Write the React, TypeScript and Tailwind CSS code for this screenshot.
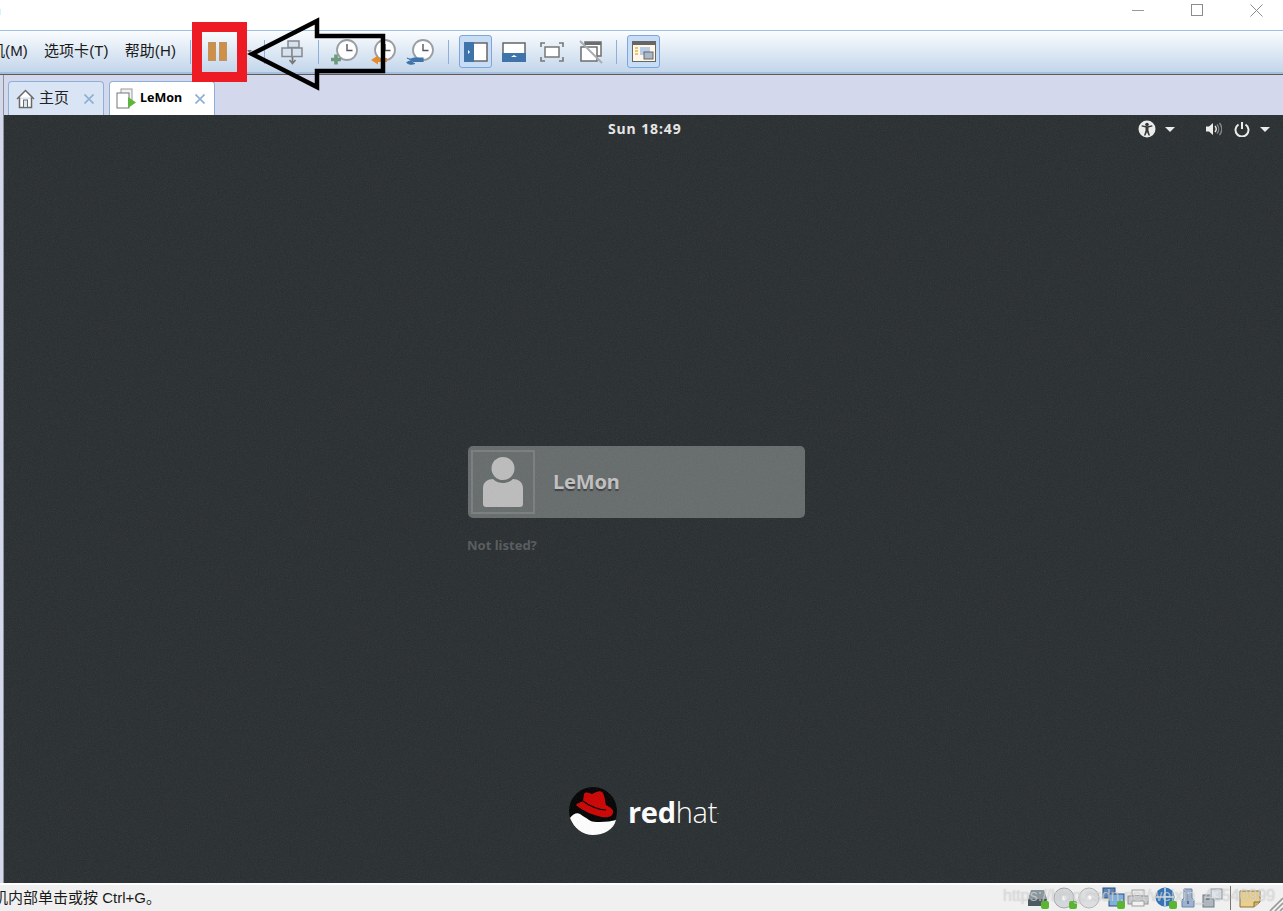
const cjk = "font-['Liberation_Sans','Noto_Sans_CJK_SC',sans-serif]";

function Sep() {
  return <div className="w-px h-[24px] bg-[#8fb0d6] shrink-0" />;
}

function Clock({ children }: { children?: React.ReactNode }) {
  return (
    <svg width="32" height="32" viewBox="0 0 32 32">
      <circle cx="18" cy="14" r="10" fill="#fff" stroke="#9a9ea3" strokeWidth="1.800" />
      <path d="M18 8v6.500h5.500" fill="none" stroke="#55595e" strokeWidth="1.400" />
      {children}
    </svg>
  );
}

function SendKeys() {
  return (
    <svg width="26" height="28" viewBox="0 0 26 28">
      <g fill="#d7e2f0" stroke="#85898f" strokeWidth="1.500">
        <rect x="9" y="3" width="11" height="6.500" />
        <rect x="3" y="10" width="10" height="8.500" />
        <rect x="13" y="10" width="10" height="8.500" />
      </g>
      <path d="M13.500 19v6M10.500 22l3 3.500 3-3.500" fill="none" stroke="#777" strokeWidth="1.700" />
    </svg>
  );
}

function ToolbarIcons() {
  return (
    <div className="w-[129px] flex items-center pl-[10px] gap-[6px] shrink-0">
      <Clock>
        <path d="M2 23.500h10M7 18.500v10" stroke="#6d9a7c" strokeWidth="3.600" />
      </Clock>
      <Clock>
        <path d="M4 24l7-4.500v2.500h9v4h-9v2.500z" fill="#e58b2d" />
      </Clock>
      <Clock>
        <path d="M2 22c3 2 5 1 7 0h9v3.500H9c-2-1-4-1-7 1 1 2 5 2 8 1" fill="#3f74aa" stroke="#3f74aa" strokeWidth="1.200" />
      </Clock>
    </div>
  );
}

function ViewButtons() {
  return (
    <div className="flex items-center shrink-0 pl-[10px] w-[167px]">
      <div className="w-[33px] h-[33px] rounded-[3px] border border-[#7ea6dc] bg-[#c7dcf5] flex items-center justify-center shrink-0">
        <svg width="24" height="20" viewBox="0 0 24 20">
          <rect x="1" y="1" width="22" height="18" fill="#fff" stroke="#666" strokeWidth="1.500" />
          <rect x="0" y="0" width="10" height="20" fill="#3f74aa" />
          <path d="M4 8v4l2-2z" fill="#fff" />
        </svg>
      </div>
      <div className="w-[43px] flex justify-center shrink-0">
        <svg width="24" height="20" viewBox="0 0 24 20">
          <rect x="1" y="1" width="22" height="18" fill="#fff" stroke="#666" strokeWidth="1.500" />
          <rect x="0" y="11" width="24" height="9" fill="#3f74aa" />
          <path d="M9 15h6l-3-2z" fill="#fff" />
        </svg>
      </div>
      <div className="w-[33px] flex justify-center shrink-0">
        <svg width="24" height="20" viewBox="0 0 24 20">
          <rect x="5" y="5" width="14" height="10" fill="#fff" stroke="#777" strokeWidth="1.500" />
          <path d="M1 5V1h4M19 1h4v4M23 15v4h-4M5 19H1v-4" fill="none" stroke="#777" strokeWidth="1.600" />
        </svg>
      </div>
      <div className="w-[45px] flex justify-center shrink-0">
        <svg width="24" height="24" viewBox="0 0 24 24">
          <rect x="6" y="2" width="16" height="14" fill="#fff" stroke="#6d6d6d" strokeWidth="1.500" />
          <rect x="6" y="2" width="16" height="3" fill="#6d6d6d" />
          <rect x="2" y="7" width="16" height="14" fill="#fff" stroke="#6d6d6d" strokeWidth="1.500" />
          <path d="M1 1l22 22" stroke="#a9adb3" strokeWidth="2" />
        </svg>
      </div>
    </div>
  );
}

function StatusIcons() {
  return (
    <div className="flex items-center h-full shrink-0">
      <svg width="242" height="24" viewBox="0 0 242 24">
        {/* disk */}
        <path d="M4 4h13l3 9v7H1v-7z" fill="#8b979e" />
        <rect x="1" y="13" width="19" height="7" fill="#4d5a62" />
        <rect x="14" y="15" width="8" height="8" rx="2" fill="#5cb531" />
        {/* cd drives */}
        <circle cx="37" cy="12" r="10" fill="#d5d8db" stroke="#a4a8ac" />
        <circle cx="37" cy="12" r="2.500" fill="#fff" />
        <rect x="42" y="15" width="8" height="8" rx="2" fill="#5cb531" />
        <circle cx="62" cy="12" r="10" fill="#dcdedf" stroke="#b4b6b8" />
        <circle cx="62" cy="12" r="2.500" fill="#fff" />
        {/* network */}
        <rect x="76" y="2" width="12" height="10" fill="#5d86b8" stroke="#2f4f7a" />
        <rect x="82" y="8" width="15" height="12" fill="#7fb0de" stroke="#2f4f7a" />
        <rect x="90" y="15" width="8" height="8" rx="2" fill="#5cb531" />
        {/* printer */}
        <rect x="105" y="4" width="12" height="6" fill="#eee" stroke="#a0a0a0" />
        <rect x="101" y="10" width="20" height="8" fill="#c9cbce" stroke="#8f9295" />
        <rect x="105" y="15" width="12" height="5" fill="#f2f2f2" stroke="#a0a0a0" />
        {/* globe */}
        <circle cx="138" cy="11" r="9.500" fill="#3574b5" />
        <path d="M138 2v18M129 11h18" stroke="#cfe0f0" strokeWidth="1.500" />
        <rect x="142" y="15" width="8" height="8" rx="2" fill="#5cb531" />
        {/* usb */}
        <path d="M157 3h8v9l2 2v7h-12v-7l2-2z" fill="#9db3cf" stroke="#6c85a6" />
        <path d="M161 8v10" stroke="#3d5c85" strokeWidth="1.400" />
        {/* sound */}
        <rect x="176" y="9" width="11" height="12" fill="#aeb7c0" stroke="#6f7880" />
        <rect x="184" y="3" width="11" height="10" fill="#dfe5ec" stroke="#8b95a0" />
        <path d="M179 13h5" stroke="#444" />
        {/* separator */}
        <rect x="203" y="0" width="1" height="24" fill="#777" />
        {/* note */}
        <path d="M213 5h20v11l-6 5h-14z" fill="#ead08a" stroke="#8a7440" />
        <path d="M227 21v-5h6" fill="#cfb36a" stroke="#8a7440" />
      </svg>
      <svg width="14" height="14" viewBox="0 0 14 14" className="self-end">
        <path d="M14 1L1 14M14 6l-8 8M14 11l-3 3" stroke="#9a9a9a" strokeWidth="1.600" />
      </svg>
    </div>
  );
}

function GnomeTray() {
  return (
    <div className="flex items-center text-white">
      <svg width="18" height="18" viewBox="0 0 18 18">
        <circle cx="9" cy="9" r="8.500" fill="#eeeeec" />
        <circle cx="9" cy="4.500" r="1.800" fill="#2e3336" />
        <path d="M3.500 6.500l4 1v3l-1.500 5h1.500l1.500-3.500 1.500 3.500H12l-1.500-5v-3l4-1-.3-1.200-5.200 1-5.200-1z" fill="#2e3336" />
      </svg>
      <svg className="ml-[9px]" width="10" height="5" viewBox="0 0 10 5"><path d="M0 0h10L5 5z" fill="#eeeeec" /></svg>
      <svg className="ml-[31px]" width="16" height="16" viewBox="0 0 16 16">
        <path d="M0 5.500h3L7 2v12l-4-3.500H0z" fill="#eeeeec" />
        <path d="M9 5c1.500 1.800 1.500 4.200 0 6" fill="none" stroke="#eeeeec" strokeWidth="1.400" />
        <path d="M11 3.500c2.300 2.600 2.300 6.400 0 9M13.500 2c3 3.500 3 8.500 0 12" fill="none" stroke="#808486" strokeWidth="1.400" />
      </svg>
      <svg className="ml-[12px]" width="16" height="16" viewBox="0 0 16 16">
        <path d="M4.500 3.500a6.500 6.500 0 1 0 7 0" fill="none" stroke="#eeeeec" strokeWidth="2" />
        <path d="M8 1v7" stroke="#eeeeec" strokeWidth="2" />
      </svg>
      <svg className="ml-[10px]" width="10" height="5" viewBox="0 0 10 5"><path d="M0 0h10L5 5z" fill="#eeeeec" /></svg>
    </div>
  );
}

function RedHatMark() {
  return (
    <svg width="48" height="48" viewBox="0 0 48 48">
      <circle cx="24" cy="24" r="24" fill="#000" />
      <path d="M1 31c3-4 7-6 10-4 4 3 7 4 9 6 3 2 6 2 11 2 6 0 12-1 16-2-2 9-12 15-23 15C13 48 5 41 1 31z" fill="#fff" />
      <path d="M7 18c2-3 5-2 7-4l1-7c2-3 5-1 8 0 3-1 7-4 10-2 3 3 3 10 4 13 3 2 8 4 7 8-1 4-6 5-11 4-8-2-18-5-26-12z" fill="#cc0000" />
      <path d="M14 14c6 5 16 9 23 9" fill="none" stroke="#000" strokeWidth="1.200" />
    </svg>
  );
}

export default function App() {
  return (
    <div className={`relative w-[1283px] h-[911px] overflow-hidden bg-white flex flex-col ${cjk}`}>
      {/* title bar */}
      <div className="h-[30px] shrink-0 flex items-center bg-white relative">
        <span className="-ml-[7px] -mt-[9px] text-[14px] text-[#555]">n</span>
        <div className="ml-auto flex items-center pr-[20px] -mt-[10px]">
          <div className="w-[12px] h-px bg-[#9a9a9a]" />
          <div className="ml-[47px] w-[12px] h-[12px] border border-[#8c8c8c]" />
          <svg className="ml-[47px]" width="13" height="13" viewBox="0 0 13 13">
            <path d="M0.500 0.500l12 12M12.500 0.500l-12 12" stroke="#8c8c8c" strokeWidth="1" />
          </svg>
        </div>
      </div>

      {/* toolbar */}
      <div className="h-[44px] shrink-0 flex items-center border-t border-[#9cc0e2] border-b-2 border-b-[#a5bfdc] bg-gradient-to-b from-[#fafcfe] to-[#c3d6eb]">
        <div className="w-[190px] shrink-0 overflow-hidden flex items-center text-[15px] text-[#1a1a1a] whitespace-nowrap gap-[16px] tracking-[0.1px]">
          <span className="-ml-[10px]">机(M)</span>
          <span>选项卡(T)</span>
          <span>帮助(H)</span>
        </div>
        <Sep />
        <div className="w-[73px] shrink-0 flex items-center pl-[17px] gap-[3px]">
          <div className="w-[8px] h-[19px] bg-[#d08f47] border border-[#b99568]" />
          <div className="w-[8px] h-[19px] bg-[#d08f47] border border-[#b99568]" />
          <svg className="ml-[17px]" width="5" height="3" viewBox="0 0 5 3"><path d="M0 0h5L2.500 3z" fill="#777" /></svg>
        </div>
        <Sep />
        <div className="w-[53px] shrink-0 flex justify-center">
          <SendKeys />
        </div>
        <Sep />
        <ToolbarIcons />
        <Sep />
        <ViewButtons />
        <Sep />
        <div className="ml-[10px] w-[33px] h-[33px] rounded-[3px] border border-[#7ea6dc] bg-[#c7dcf5] flex items-center justify-center shrink-0">
          <svg width="24" height="21" viewBox="0 0 24 21">
            <rect x="0.500" y="0.500" width="23" height="20" fill="#fff8e8" stroke="#666" />
            <rect x="0" y="0" width="24" height="4" fill="#666" />
            <path d="M3 7h3M3 10h3M3 13h3" stroke="#e8b04a" strokeWidth="1.300" />
            <rect x="8" y="6" width="10" height="8" fill="#b9cde6" />
            <rect x="12" y="11" width="9" height="7" fill="#aab8c8" stroke="#666" />
          </svg>
        </div>
      </div>
      <div className="h-px shrink-0 bg-[#5f5a55]" />

      {/* tab strip */}
      <div className="h-[40px] shrink-0 bg-[#d3d8ec] pl-[3px]">
        <div className="h-full border-l border-l-[#8f9296] flex items-end pl-[4px] gap-[5px]">
          <div className="w-[96px] h-[34px] rounded-t-[4px] border border-b-0 border-[#8fb0d6] bg-[#d9e5f4] flex items-center pl-[7px] text-[15px] text-[#222]">
            <svg width="19" height="20" viewBox="0 0 19 20">
              <path d="M1 10L9.500 1.500 18 10M3.500 8.500V18.500h12V8.500" fill="#fff" stroke="#6a6a6a" strokeWidth="1.500" />
              <rect x="7.500" y="11" width="4" height="7.500" fill="#d9e5f4" stroke="#6a6a6a" />
            </svg>
            <span className="ml-[4px]">主页</span>
            <svg className="ml-[15px]" width="10" height="10" viewBox="0 0 10 10">
              <path d="M0.500 0.500l9 9M9.500 0.500l-9 9" stroke="#8db0d4" strokeWidth="1.700" />
            </svg>
          </div>
          <div className="w-[106px] h-[34px] rounded-t-[4px] border border-b-0 border-[#8fb0d6] bg-white flex items-center pl-[6px] text-[12.5px] font-bold text-black">
            <svg width="21" height="21" viewBox="0 0 21 21">
              <rect x="5" y="1" width="11" height="11" fill="#f2f2f2" stroke="#9a9a9a" />
              <rect x="1" y="5" width="12" height="15" fill="#fff" stroke="#777" />
              <path d="M12 9v11l8-5.500z" fill="#5db53c" />
            </svg>
            <span className="ml-[3px] font-['Noto_Sans',sans-serif]">LeMon</span>
            <svg className="ml-[13px]" width="10" height="10" viewBox="0 0 10 10">
              <path d="M0.500 0.500l9 9M9.500 0.500l-9 9" stroke="#8db0d4" strokeWidth="1.700" />
            </svg>
          </div>
        </div>
      </div>

      {/* guest screen */}
      <div className="h-[768px] shrink-0 bg-[#d3d8ec] pl-[3px]">
        <div className="h-full border-l border-l-[#8f9296] bg-[#272c2f] flex flex-col font-['Noto_Sans',sans-serif] relative">
          <div className="h-[27px] shrink-0 flex items-center relative pr-[13px]">
            <span className="ml-[604px] text-[14px] font-bold text-[#e8e8e6] tracking-[0.9px]">Sun 18:49</span>
            <div className="ml-auto mt-[1px]"><GnomeTray /></div>
          </div>
          <div className="ml-[464px] mt-[304px] w-[337px] h-[72px] rounded-[5px] bg-[#656a6b] flex items-center pl-[3px]">
            <div className="w-[64px] h-[64px] border-2 border-[#797d7e] flex items-center justify-center">
              <svg width="40" height="50" viewBox="0 0 40 50">
                <circle cx="20" cy="11.500" r="11.500" fill="#bcbcbc" />
                <path d="M0 31c0-6 5-9 10-9 3 3 7 4 10 4s7-1 10-4c5 0 10 3 10 9v16c0 2-1 3-3 3H3c-2 0-3-1-3-3z" fill="#bcbcbc" />
              </svg>
            </div>
            <span className="ml-[18px] text-[20px] tracking-[-0.2px] font-bold text-[#c0c0c0] [text-shadow:0_2px_1px_#3a3d3f]">LeMon</span>
          </div>
          <span className="ml-[463px] mt-[18px] text-[13px] leading-[18px] font-bold text-[#55595b]">Not listed?</span>
          <div className="ml-[565px] mt-[233px] flex items-center">
            <RedHatMark />
            <div className="ml-[11px] mt-[2px] text-[29px] leading-[36px] text-white font-['Open_Sans',sans-serif] tracking-[-0.3px]">
              <span className="font-bold">red</span><span className="font-light">hat</span>
              <span className="text-[7px] align-top">.</span>
            </div>
          </div>
          <svg className="absolute inset-0 w-full h-full pointer-events-none opacity-[0.1]">
            <filter id="grain">
              <feTurbulence type="fractalNoise" baseFrequency="1.100" numOctaves="2" />
              <feColorMatrix type="saturate" values="0" />
            </filter>
            <rect width="100%" height="100%" filter="url(#grain)" />
          </svg>
        </div>
      </div>

      {/* status bar */}
      <div className="flex-1 bg-[#f0f0f0] border-t-2 border-t-white flex items-center text-[15px] text-[#1a1a1a] justify-between">
        <span className="-ml-[7px] whitespace-nowrap">机内部单击或按 Ctrl+G。</span>
        <StatusIcons />
      </div>

      {/* annotations drawn on top of the screenshot */}
      <div className="absolute left-[192px] top-[22px] w-[55px] h-[60px] border-[10px] border-[#ed1c24]" />
      <svg className="absolute left-[245px] top-[14px]" width="145" height="80" viewBox="0 0 145 80">
        <path d="M7 40L72 7V22H138V57H72V73z" fill="none" stroke="#000" strokeWidth="4.500" strokeLinejoin="miter" />
      </svg>
      <span className="absolute left-[1003px] top-[884px] text-[16px] text-white/50 whitespace-nowrap font-['Liberation_Sans',sans-serif] [text-shadow:0_0_1px_rgba(120,120,120,0.5)]">
        https://blog.csdn.net/weixin_43540999
      </span>
    </div>
  );
}
